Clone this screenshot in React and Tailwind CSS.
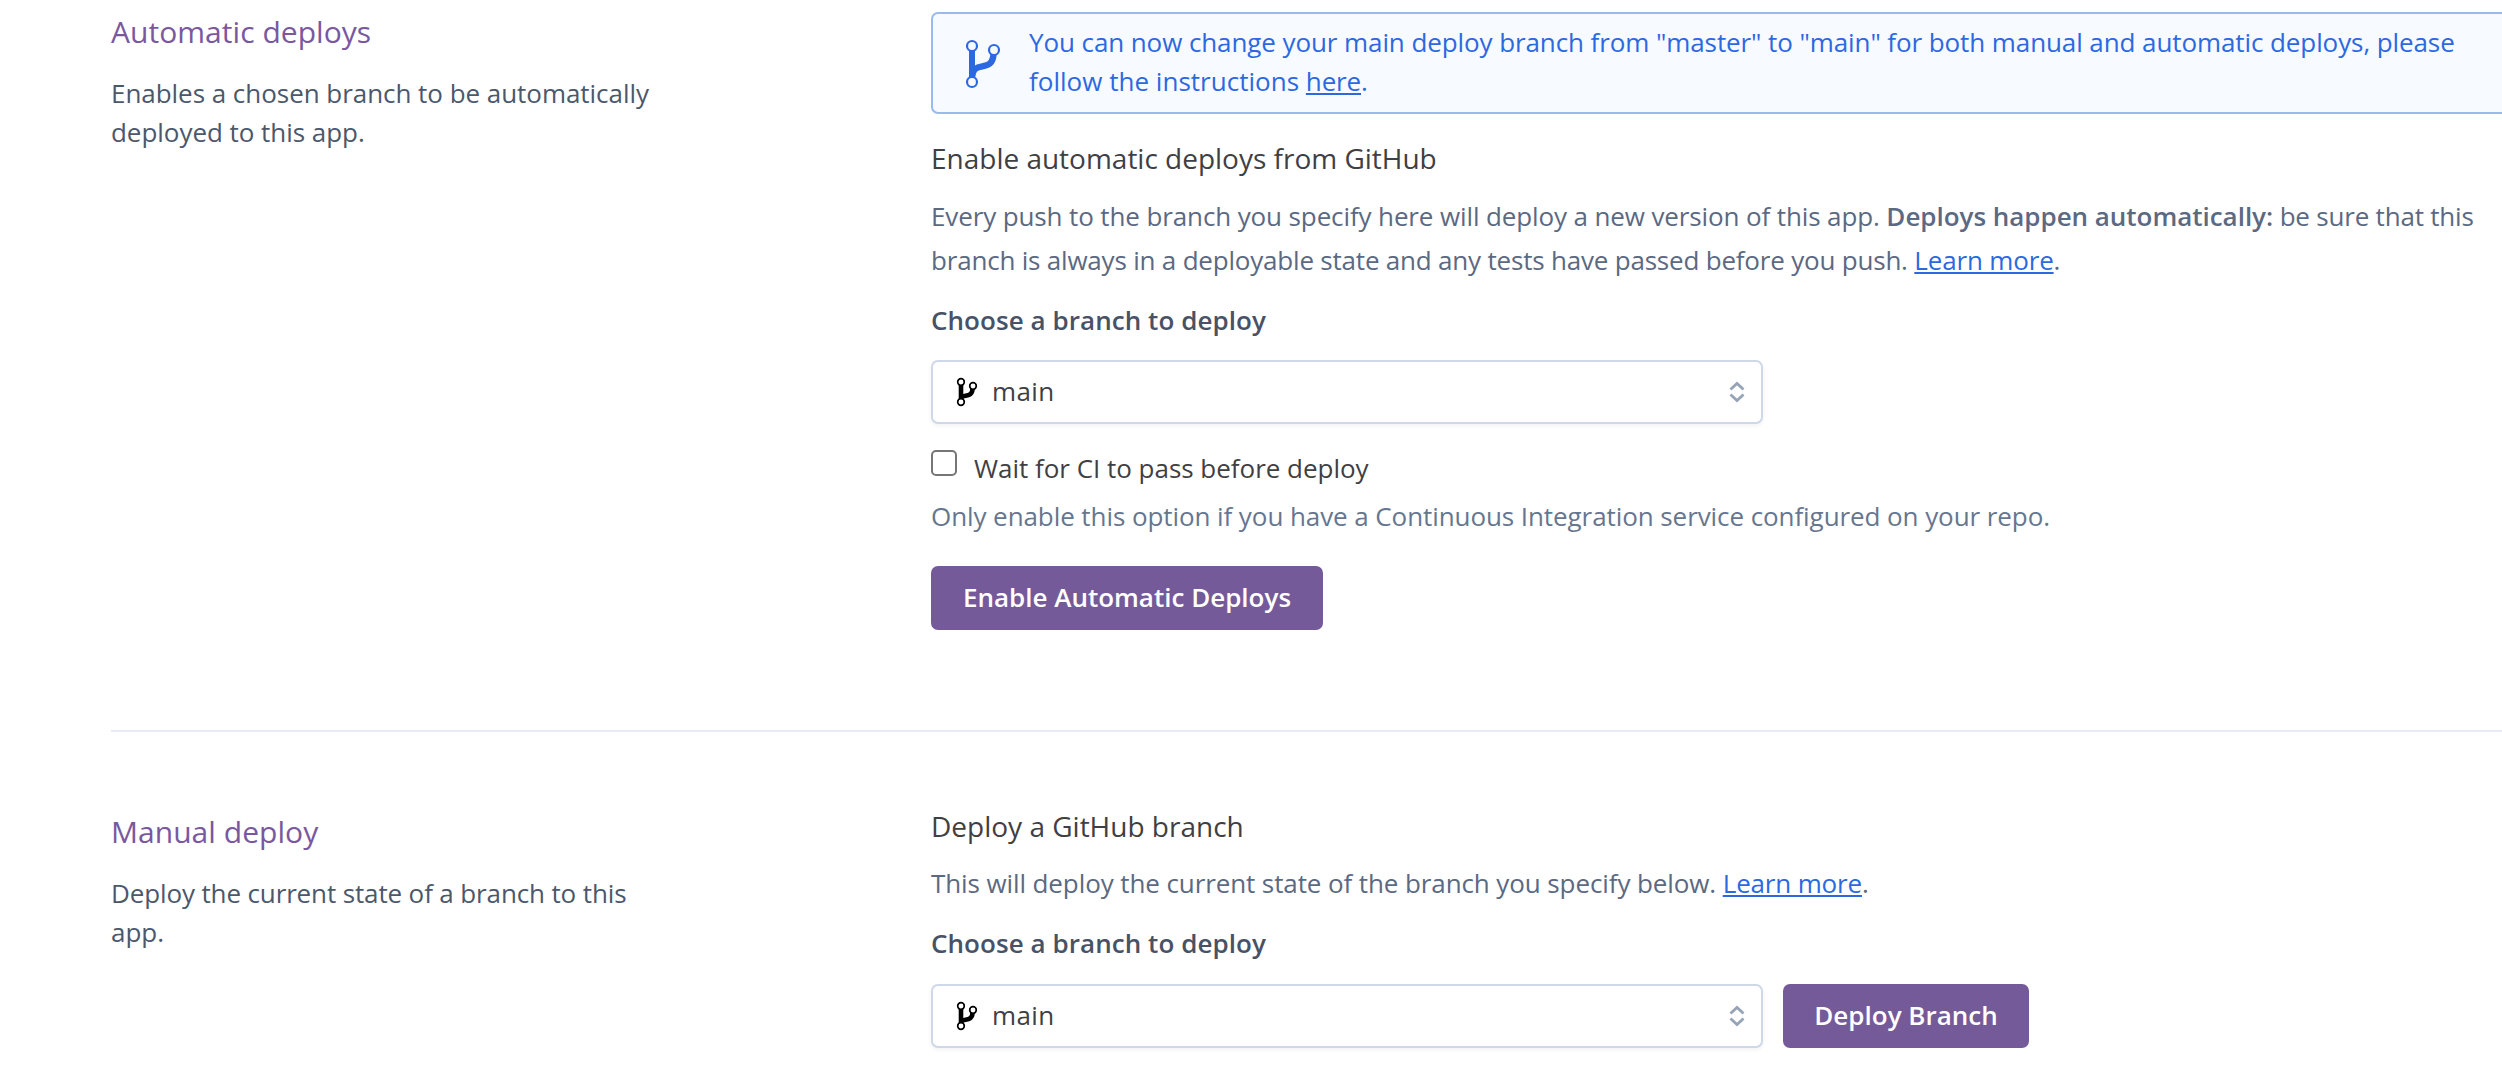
import React from "react";

function BranchIconLarge() {
  return (
    <svg width="36" height="50" viewBox="0 0 36 50" fill="none" stroke="#2c69e1" className="shrink-0">
      <path d="M7 11v28" strokeWidth="6" />
      <path d="M7 38c1-18 20.500-3 21.500-23" strokeWidth="6.400" />
      <g strokeWidth="2.200" fill="#f7faff">
        <circle cx="7" cy="7" r="5" />
        <circle cx="7" cy="43" r="5" />
        <circle cx="29" cy="11" r="5" />
      </g>
    </svg>
  );
}

function BranchIconSmall() {
  return (
    <svg width="22" height="30" viewBox="0 0 22 30" fill="none" stroke="#000" className="shrink-0">
      <path d="M5 8v15" strokeWidth="4.600" />
      <path d="M5 20.500c3.500-3 11.500 0 11.500-9" strokeWidth="4.600" />
      <g strokeWidth="1.700" fill="#fff">
        <circle cx="5" cy="5" r="3.300" />
        <circle cx="5" cy="25" r="3.300" />
        <circle cx="17" cy="9" r="3.300" />
      </g>
    </svg>
  );
}

function BranchSelect({ value }) {
  return (
    <div className="flex h-16 w-[832px] shrink-0 items-center rounded-[7px] border-2 border-[#cfd8e7] bg-white pr-4 pl-[23px] shadow-[0_2px_4px_rgba(0,0,0,0.05)]">
      <BranchIconSmall />
      <span className="-mt-0.5 ml-[14px] flex-1 text-[26px] leading-10 tracking-[0.4px] text-[#3f3f44]">{value}</span>
      <svg width="16" height="22" viewBox="0 0 16 22" fill="none" stroke="#97a3b7" strokeWidth="2.800">
        <path d="M1.500 8.500 8 2.500l6.500 6M1.500 13.500l6.500 6 6.500-6" />
      </svg>
    </div>
  );
}

function Button({ children, className }) {
  return (
    <button className={"h-16 shrink-0 rounded-[7px] bg-[#755a99] pb-[3px] text-[26px] leading-10 font-semibold text-white " + className}>
      {children}
    </button>
  );
}

function Link({ children }) {
  return (
    <a href="#" className="tracking-[-0.16px] text-[#2c69e1] underline decoration-2 underline-offset-[2px]">
      {children}
    </a>
  );
}

function SectionIntro({ title, children }) {
  return (
    <div className="w-[820px] shrink-0 pt-3">
      <h2 className="text-[30px] leading-10 tracking-[0.04px] text-[#79589f]">{title}</h2>
      <p className="mt-[22px] text-[26px] leading-[39px] tracking-[-0.04px] text-[#4b586c]">{children}</p>
    </div>
  );
}

export default function App() {
  return (
    <div className="h-[1066px] w-full overflow-hidden bg-white font-['Open_Sans',sans-serif] whitespace-nowrap">
      <div className="w-[2600px] pl-[111px]">
        <section className="flex h-[730px]">
          <SectionIntro title="Automatic deploys">
            Enables a chosen branch to be automatically
            <br />
            deployed to this app.
          </SectionIntro>

          <div className="flex-1 pt-3">
            <div className="flex h-[102px] rounded-[7px] border-2 border-[#98bbef] bg-[#f7faff] pt-[9px] pl-8">
              <div className="pt-4">
                <BranchIconLarge />
              </div>
              <p className="ml-7 text-[26px] leading-[39px] tracking-[-0.09px] text-[#2c69e1]">
                You can now change your main deploy branch from "master" to "main" for both manual and automatic
                deploys, please
                <br />
                <span className="tracking-[0.02px]">follow the instructions </span>
                <Link>here</Link>.
              </p>
            </div>

            <h3 className="mt-6 text-[28px] leading-10 tracking-[-0.01px] text-[#3f3f44]">
              Enable automatic deploys from GitHub
            </h3>
            <p className="mt-4 text-[26px] leading-[44px] tracking-[-0.12px] text-[#5b6982]">
              Every push to the branch you specify here will deploy a new version of this app.{" "}
              <b className="font-semibold tracking-[-0.03px]">Deploys happen automatically:</b>
              <span className="tracking-[-0.2px]"> be sure that this</span>
              <br />
              <span className="tracking-[-0.2px]">
                branch is always in a deployable state and any tests have passed before you push.{" "}
              </span>
              <Link>Learn more</Link>.
            </p>

            <div className="mt-[18px] text-[26px] leading-10 font-semibold tracking-[0.06px] text-[#475266]">
              Choose a branch to deploy
            </div>
            <div className="mt-5">
              <BranchSelect value="main" />
            </div>

            <label className="mt-6 flex text-[26px] leading-10 tracking-[-0.02px] text-[#3f3f44]">
              <span className="mt-0.5 mr-[17px] size-[26px] rounded-[5px] border-2 border-[#767676] bg-white" />
              Wait for CI to pass before deploy
            </label>
            <p className="mt-2 text-[26px] leading-10 tracking-[-0.08px] text-[#66768f]">
              Only enable this option if you have a Continuous Integration service configured on your repo.
            </p>
            <Button className="mt-[30px] w-[392px]">Enable Automatic Deploys</Button>
          </div>
        </section>

        <section className="flex border-t-2 border-[#e8ebf3] pt-[68px]">
          <SectionIntro title="Manual deploy">
            <span className="tracking-[-0.13px]">Deploy the current state of a branch to this</span>
            <br />
            app.
          </SectionIntro>

          <div className="flex-1 pt-[6px]">
            <h3 className="text-[28px] leading-10 text-[#3f3f44]">Deploy a GitHub branch</h3>
            <p className="mt-[15px] text-[26px] leading-[44px] tracking-[-0.1px] text-[#5b6982]">
              This will deploy the current state of the branch you specify below. <Link>Learn more</Link>.
            </p>
            <div className="mt-[18px] text-[26px] leading-10 font-semibold tracking-[0.06px] text-[#475266]">
              Choose a branch to deploy
            </div>
            <div className="mt-[21px] flex gap-5">
              <BranchSelect value="main" />
              <Button className="w-[246px]">Deploy Branch</Button>
            </div>
          </div>
        </section>
      </div>
    </div>
  );
}
